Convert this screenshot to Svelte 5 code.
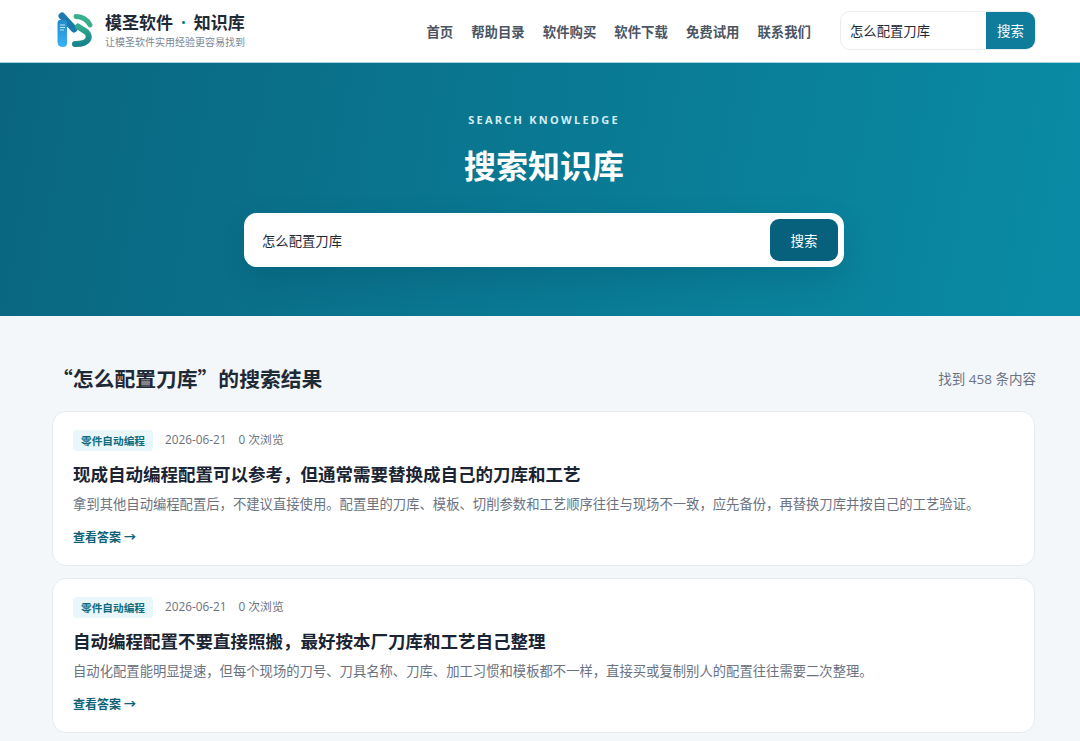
<script>
	const nav = ['首页', '帮助目录', '软件购买', '软件下载', '免费试用', '联系我们'];
	const results = [
		{
			tag: '零件自动编程',
			date: '2026-06-21',
			views: '0 次浏览',
			title: '现成自动编程配置可以参考，但通常需要替换成自己的刀库和工艺',
			desc: '拿到其他自动编程配置后，不建议直接使用。配置里的刀库、模板、切削参数和工艺顺序往往与现场不一致，应先备份，再替换刀库并按自己的工艺验证。'
		},
		{
			tag: '零件自动编程',
			date: '2026-06-21',
			views: '0 次浏览',
			title: '自动编程配置不要直接照搬，最好按本厂刀库和工艺自己整理',
			desc: '自动化配置能明显提速，但每个现场的刀号、刀具名称、刀库、加工习惯和模板都不一样，直接买或复制别人的配置往往需要二次整理。'
		}
	];
</script>

<header class="topbar">
	<div class="brand">
		<svg class="logo" viewBox="0 0 36 36" width="36" height="36">
			<defs>
				<linearGradient id="lg-blue" x1="0" y1="0" x2="0" y2="1">
					<stop offset="0" stop-color="#1f8ccb" />
					<stop offset="1" stop-color="#38b2f7" />
				</linearGradient>
				<linearGradient id="lg-green" gradientUnits="userSpaceOnUse" x1="20" y1="12" x2="24" y2="35">
					<stop offset="0" stop-color="#38b08c" />
					<stop offset="1" stop-color="#137f8e" />
				</linearGradient>
			</defs>
			<path d="M5 4 L17 17" stroke="#1c79ad" stroke-width="7" stroke-linecap="round" fill="none" />
			<path d="M0.5 11 Q0.5 8 3 8 L8 8 Q10 8 10 11 L10 31 Q10 35 6 35 Q0.5 35 0.5 30 Z" fill="url(#lg-blue)" />
			<path d="M3 13 H8 M3 15.5 H8 M3 18 H7" stroke="#bfe6fb" stroke-width="1.1" />
			<path d="M19 4.5 Q29 5 33 13" stroke="#39ad8c" stroke-width="5" stroke-linecap="round" fill="none" />
			<path d="M21 14.5 L29.5 20 Q33 23.5 31 27.5 Q29 32 18 32" stroke="url(#lg-green)" stroke-width="6" stroke-linecap="round" fill="none" />
		</svg>
		<div class="brand-text">
			<div class="brand-name">模圣软件<span class="dot">·</span>知识库</div>
			<div class="brand-sub">让模圣软件实用经验更容易找到</div>
		</div>
	</div>
	<nav class="nav">
		{#each nav as item}
			<a href="#top">{item}</a>
		{/each}
	</nav>
	<form class="top-search">
		<input type="text" value="怎么配置刀库" />
		<button type="button">搜索</button>
	</form>
</header>

<section class="hero">
	<div class="eyebrow">SEARCH KNOWLEDGE</div>
	<h1>搜索知识库</h1>
	<form class="hero-search">
		<input type="text" value="怎么配置刀库" />
		<button type="button">搜索</button>
	</form>
</section>

<main class="content">
	<div class="result-head">
		<h2>“怎么配置刀库”的搜索结果</h2>
		<span class="count">找到 458 条内容</span>
	</div>
	{#each results as r}
		<article class="card">
			<div class="meta">
				<span class="tag">{r.tag}</span>
				<span>{r.date}</span>
				<span>{r.views}</span>
			</div>
			<h3>{r.title}</h3>
			<p>{r.desc}</p>
			<a class="more" href="#top">查看答案 →</a>
		</article>
	{/each}
</main>

<style>
	:global(body) {
		margin: 0;
		background: #f3f7fa;
		font-family: "Open Sans", "Noto Sans CJK SC", sans-serif;
		height: 741px;
		overflow: hidden;
	}

	.topbar {
		height: 63px;
		box-sizing: border-box;
		background: #fff;
		border-bottom: 1px solid #a9d3de;
		display: flex;
		align-items: center;
		padding: 0 44px 2px 57px;
	}

	.brand {
		display: flex;
		align-items: center;
		gap: 12px;
	}

	.logo {
		display: block;
	}

	.brand-name {
		font-size: 17px;
		line-height: 24px;
		font-weight: 700;
		color: #1f2a37;
	}

	.dot {
		color: #0f7f8f;
		margin: 0 8px;
	}

	.brand-sub {
		font-size: 10px;
		line-height: 14px;
		color: #7b8794;
	}

	.nav {
		margin-left: auto;
		display: flex;
		gap: 18px;
		padding-top: 2px;
	}

	.nav a {
		font-size: 13.4px;
		font-weight: 700;
		color: #4b5563;
		text-decoration: none;
	}

	.top-search {
		margin-left: 29px;
		display: flex;
		width: 196px;
		height: 39px;
		box-sizing: border-box;
		border: 1px solid #e8edf1;
		border-radius: 10px;
		overflow: hidden;
	}

	.top-search input {
		flex: 1;
		min-width: 0;
		border: 0;
		outline: 0;
		padding: 0 9px;
		font: inherit;
		font-size: 13.33px;
		color: #1f2a37;
		background: #fff;
	}

	.top-search button {
		width: 49px;
		border: 0;
		background: #0f7c9c;
		color: #fff;
		font: inherit;
		font-size: 13.5px;
		padding: 0;
	}

	.hero {
		height: 253px;
		box-sizing: border-box;
		padding: 49px 0 0 8px;
		background: linear-gradient(100deg, #0a6680 0%, #0a8ba5 100%);
		display: flex;
		flex-direction: column;
		align-items: center;
		color: #fff;
	}

	.eyebrow {
		font-size: 11px;
		line-height: 16px;
		font-weight: 700;
		letter-spacing: 2.25px;
		color: #d4eef4;
	}

	.hero h1 {
		margin: 16px 0 0;
		font-size: 32px;
		line-height: 44px;
		font-weight: 700;
	}

	.hero-search {
		margin-top: 25px;
		width: 600px;
		height: 54px;
		box-sizing: border-box;
		padding: 6px;
		background: #fff;
		border-radius: 13px;
		display: flex;
		box-shadow: 0 12px 30px rgba(0, 50, 70, 0.18);
	}

	.hero-search input {
		flex: 1;
		min-width: 0;
		border: 0;
		outline: 0;
		padding: 0 12px;
		font: inherit;
		font-size: 13.33px;
		color: #1f2a37;
		background: transparent;
	}

	.hero-search button {
		width: 68px;
		border: 0;
		border-radius: 9px;
		background: #08617c;
		color: #fff;
		font: inherit;
		font-size: 13.5px;
		padding: 0;
	}

	.content {
		padding: 0 44px 0 52px;
	}

	.result-head {
		display: flex;
		align-items: center;
		justify-content: space-between;
		box-sizing: border-box;
		height: 95px;
		padding-top: 29px;
	}

	.result-head h2 {
		margin: 0;
		font-family: "Noto Sans CJK SC", sans-serif;
		font-size: 20.8px;
		font-weight: 700;
		color: #1f2a37;
	}

	.count {
		font-size: 13.5px;
		color: #6b7280;
	}

	.card {
		background: #fff;
		border: 1px solid #e6ebf0;
		border-radius: 14px;
		box-sizing: border-box;
		height: 155px;
		padding: 18px 20px 0;
		margin-bottom: 12px;
		margin-right: 1px;
	}

	.meta {
		display: flex;
		align-items: flex-start;
		gap: 12px;
		font-size: 11.8px;
		line-height: 19px;
		color: #6b7280;
	}

	.tag {
		background: #e9f6fa;
		color: #0d6c80;
		font-size: 10.67px;
		line-height: 16px;
		font-weight: 700;
		padding: 3px 8px 2px;
		border-radius: 4px;
	}

	.card h3 {
		margin: 10px 0 0;
		font-size: 17.5px;
		line-height: 26px;
		font-weight: 700;
		color: #1a2433;
	}

	.card p {
		margin: 6px 0 0;
		font-size: 13.33px;
		line-height: 22px;
		color: #6b7280;
	}

	.more {
		display: block;
		margin-top: 13px;
		font-size: 12px;
		line-height: 20px;
		font-weight: 700;
		color: #0b6177;
		text-decoration: none;
	}
</style>
